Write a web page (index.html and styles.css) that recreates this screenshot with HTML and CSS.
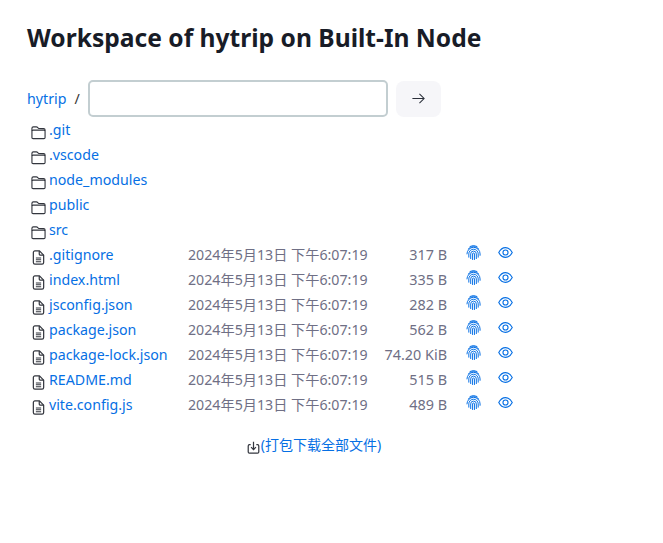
FILE: index.html
```html
<!DOCTYPE html>
<html lang="zh">
<head>
<meta charset="utf-8">
<title>Workspace of hytrip on Built-In Node</title>
<link rel="stylesheet" href="styles.css">
</head>
<body>
<svg class="defs" width="0" height="0" aria-hidden="true">
  <symbol id="i-folder" viewBox="0 0 16 16"><g fill="none" stroke="currentColor" stroke-width="1.2"><path d="M1 6V3.500A1.500 1.500 0 0 1 2.500 2h3.300a1.500 1.500 0 0 1 1 .4l1 1a1.500 1.500 0 0 0 1 .4h4.700A1.500 1.500 0 0 1 15 5.300V6"/><rect x="1" y="5.500" width="14" height="9" rx="1.200"/></g></symbol>
  <symbol id="i-file" viewBox="0 0 16 16"><g fill="none" stroke="currentColor" stroke-width="1.300"><path d="M9 1H4.200A1.700 1.700 0 0 0 2.500 2.700v10.600A1.700 1.700 0 0 0 4.200 15h7.600a1.700 1.700 0 0 0 1.700-1.700V5.500z"/><path d="M8.800 1v3.200a1.300 1.300 0 0 0 1.300 1.300h3.400"/><path d="M5.200 8.500h5.600M5.200 10.500h5.600M5.200 12.500h5.600" stroke-width="1.100"/></g></symbol>
  <symbol id="i-print" viewBox="0 0 16 16"><g fill="none" stroke="currentColor" stroke-width="1.050" stroke-linecap="round"><path d="M4.300 1.500a7.500 7.500 0 0 1 7.400 0"/><path d="M2.300 4.300a7.200 7.200 0 0 1 11.400 0"/><path d="M1 9.500a7 7 0 0 1 14 0v1.500"/><path d="M3 13V9.500a5 5 0 0 1 10 0v3.500"/><path d="M5 14.500v-5a3 3 0 0 1 6 0v5"/><path d="M7 15.500v-6a1 1 0 0 1 2 0v6"/></g></symbol>
  <symbol id="i-eye" viewBox="0 0 16 16"><path d="M.8 8S3.500 2.800 8 2.800 15.200 8 15.200 8 12.500 13.200 8 13.200.8 8 .8 8z" fill="none" stroke="currentColor" stroke-width="1.200"/><circle cx="8" cy="8" r="2.700" fill="none" stroke="currentColor" stroke-width="1.200"/></symbol>
</svg>
<main class="page">
  <h1 class="title">Workspace of hytrip on Built-In Node</h1>
  <form class="path-bar">
    <a class="link" href="#">hytrip</a>
    <span class="slash">/</span>
    <input class="path-input" type="text" aria-label="path">
    <button class="go" type="button" aria-label="go">
      <svg class="go-icon" viewBox="0 0 16 16"><path d="M1.500 8h12.500M9 3l5 5-5 5" fill="none" stroke="currentColor" stroke-width="1.100"/></svg>
    </button>
  </form>
  <div class="files">
    <div class="row"><svg class="kind folder"><use href="#i-folder"/></svg><a class="link" href="#">.git</a></div>
    <div class="row"><svg class="kind folder"><use href="#i-folder"/></svg><a class="link" href="#">.vscode</a></div>
    <div class="row"><svg class="kind folder"><use href="#i-folder"/></svg><a class="link" href="#">node_modules</a></div>
    <div class="row"><svg class="kind folder"><use href="#i-folder"/></svg><a class="link" href="#">public</a></div>
    <div class="row"><svg class="kind folder"><use href="#i-folder"/></svg><a class="link" href="#">src</a></div>

    <div class="row"><svg class="kind"><use href="#i-file"/></svg><a class="link" href="#">.gitignore</a><span class="date">2024年5月13日 下午6:07:19</span><span class="size">317 B</span><svg class="act print"><use href="#i-print"/></svg><svg class="act eye"><use href="#i-eye"/></svg></div>
    <div class="row"><svg class="kind"><use href="#i-file"/></svg><a class="link" href="#">index.html</a><span class="date">2024年5月13日 下午6:07:19</span><span class="size">335 B</span><svg class="act print"><use href="#i-print"/></svg><svg class="act eye"><use href="#i-eye"/></svg></div>
    <div class="row"><svg class="kind"><use href="#i-file"/></svg><a class="link" href="#">jsconfig.json</a><span class="date">2024年5月13日 下午6:07:19</span><span class="size">282 B</span><svg class="act print"><use href="#i-print"/></svg><svg class="act eye"><use href="#i-eye"/></svg></div>
    <div class="row"><svg class="kind"><use href="#i-file"/></svg><a class="link" href="#">package.json</a><span class="date">2024年5月13日 下午6:07:19</span><span class="size">562 B</span><svg class="act print"><use href="#i-print"/></svg><svg class="act eye"><use href="#i-eye"/></svg></div>
    <div class="row"><svg class="kind"><use href="#i-file"/></svg><a class="link" href="#">package-lock.json</a><span class="date">2024年5月13日 下午6:07:19</span><span class="size">74.20 KiB</span><svg class="act print"><use href="#i-print"/></svg><svg class="act eye"><use href="#i-eye"/></svg></div>
    <div class="row"><svg class="kind"><use href="#i-file"/></svg><a class="link" href="#">README.md</a><span class="date">2024年5月13日 下午6:07:19</span><span class="size">515 B</span><svg class="act print"><use href="#i-print"/></svg><svg class="act eye"><use href="#i-eye"/></svg></div>
    <div class="row"><svg class="kind"><use href="#i-file"/></svg><a class="link" href="#">vite.config.js</a><span class="date">2024年5月13日 下午6:07:19</span><span class="size">489 B</span><svg class="act print"><use href="#i-print"/></svg><svg class="act eye"><use href="#i-eye"/></svg></div>
  </div>
  <div class="download">
    <svg class="dl-icon" viewBox="0 0 16 16"><path d="M4.500 4.500H3A1.500 1.500 0 0 0 1.500 6v7.500A1.500 1.500 0 0 0 3 15h10a1.500 1.500 0 0 0 1.500-1.500V6A1.500 1.500 0 0 0 13 4.500h-1.500M8 1v9.500M5 7.500l3 3.200 3-3.200" fill="none" stroke="currentColor" stroke-width="1.500"/></svg><a class="link dl-link" href="#">(打包下载全部文件)</a>
  </div>
</main>
</body>
</html>
```
FILE: styles.css
```css
* { box-sizing: border-box; }
html, body { margin: 0; padding: 0; background: #fff; }
body {
  font-family: "Noto Sans", "Noto Sans CJK SC", sans-serif;
  font-size: 14.2px;
  line-height: 20px;
  color: #1d273b;
}
.defs { display: block; height: 0; }
.page { padding: 24px 27px 0; }
.title {
  margin: 0;
  font-size: 24.6px;
  line-height: 28px;
  font-weight: 700;
  color: #181c27;
}
.link { color: #066fe4; text-decoration: none; }
.path-bar {
  display: flex;
  align-items: center;
  margin-top: 28px;
  height: 37px;
}
.slash { margin: 0 8px 0 8px; color: #333; }
.path-input {
  width: 300px;
  height: 37px;
  border: 2px solid #c3ced1;
  border-radius: 5px;
  background: #fff;
  padding: 0 8px;
  outline: none;
}
.go {
  width: 45px;
  height: 36px;
  margin-left: 8px;
  border: 0;
  border-radius: 8px;
  background: #f6f6f9;
  color: #2a2f3a;
  display: flex;
  align-items: center;
  justify-content: center;
  padding: 0;
}
.go-icon { width: 15px; height: 15px; }
.files { padding-left: 4px; }
.row {
  display: flex;
  align-items: center;
  height: 25px;
}
.kind { width: 15px; height: 15px; margin-right: 3px; flex: none; color: #33363e; position: relative; top: 3px; }
.row .link { width: 139px; flex: none; }
.date { width: 180px; flex: none; color: #6f6f85; }
.size { width: 79px; flex: none; text-align: right; color: #6f6f85; font-size: 14.4px; }
.act { width: 15px; height: 15px; flex: none; color: #066fe4; position: relative; top: -2px; }
.print { margin-left: 19px; }
.eye { margin-left: 17px; }
.download {
  display: flex;
  justify-content: center;
  align-items: center;
  margin-top: 18px;
  width: 574px;
  font-size: 14px;
}
.dl-icon { width: 13px; height: 13px; color: #33363e; position: relative; top: 2px; margin-right: 1px; }
```
